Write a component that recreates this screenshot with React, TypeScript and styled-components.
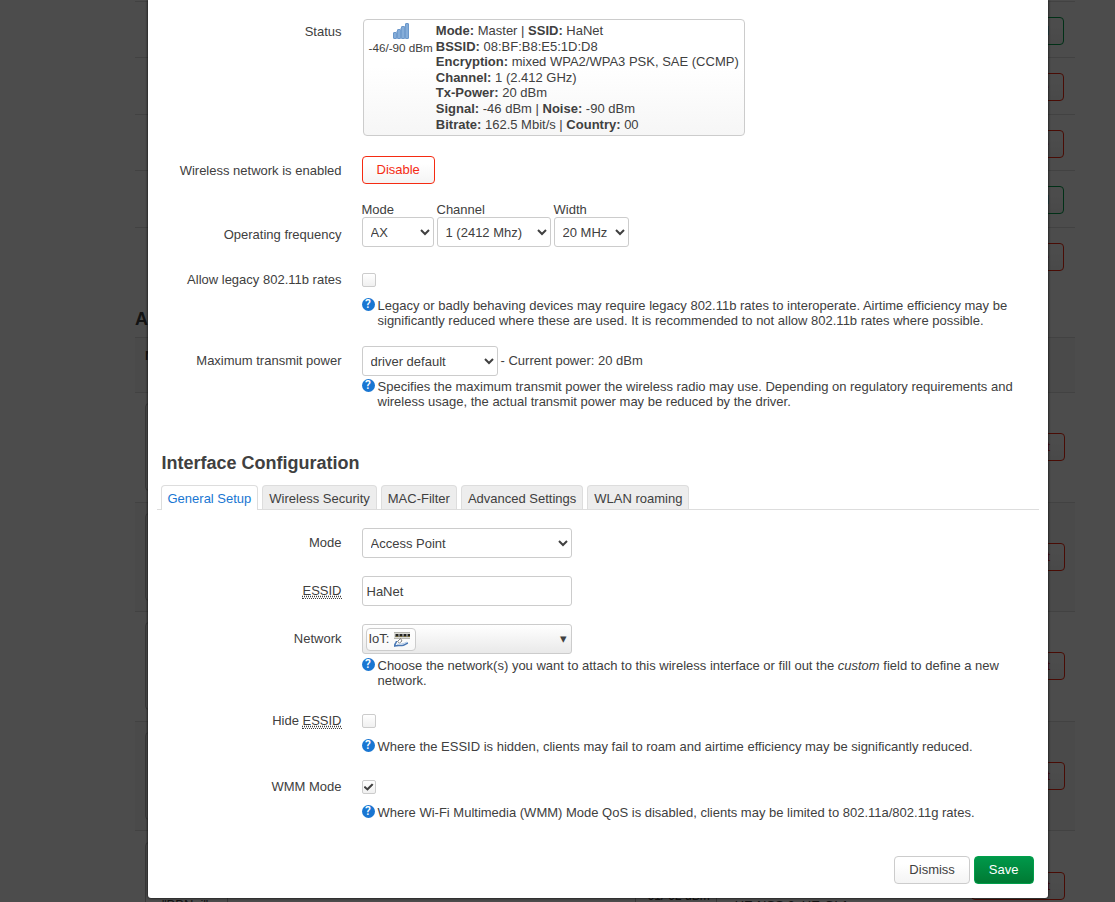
import React from 'react';
import styled, { createGlobalStyle, css } from 'styled-components';

const GlobalStyle = createGlobalStyle`
  *, *::before, *::after { box-sizing: border-box; }
  body {
    margin: 0;
    background: #fff;
    color: #404040;
    font: 13px/18px "Liberation Sans", Arial, sans-serif;
  }
  abbr { border-bottom: 1px dotted #404040; }
`;

const Stage = styled.div`
  position: relative;
  min-height: 100vh;
`;

/* ---------- page behind the dialog ---------- */

const Page = styled.div`
  position: absolute;
  inset: 0;
  overflow: hidden;
  padding: 1px 40px 0 135px;
`;

const DeviceList = styled.div`
  display: grid;
  grid-auto-rows: 1fr;
  height: 282px;
`;

const DeviceRow = styled.div`
  display: flex;
  justify-content: flex-end;
  align-items: flex-start;
  padding: 15px 11px 0;
  border-top: 1px solid #ddd;
`;

const PageTitle = styled.h3`
  margin: 26px 0 8px;
  font-size: 18px;
  line-height: 20px;
`;

const StationHead = styled.div`
  height: 55px;
  padding: 9px 10px;
  border-top: 1px solid #ddd;
  background: #f9f9f9;
  font-weight: bold;
`;

const StationList = styled.div`
  display: grid;
  grid-auto-rows: 1fr;
  height: 548px;
`;

const StationRow = styled.div<{ $striped?: boolean }>`
  display: grid;
  grid-template-columns: 83px minmax(0, 1fr) 82px 218px auto;
  column-gap: 18px;
  align-items: center;
  padding: 10px;
  border-top: 1px solid #ddd;
  background: ${p => (p.$striped ? '#f9f9f9' : '#fff')};
`;

const StationBadge = styled.div`
  display: flex;
  align-items: flex-end;
  height: 88px;
  padding: 0 0 15px 16px;
  border: 1px solid #bbb;
  border-radius: 4px;
  white-space: nowrap;
`;

const StationSignal = styled(StationBadge)`
  padding: 0 0 24px 8px;
  font-size: 12px;
`;

const StationRate = styled.div`
  padding-top: 40px;
`;

const DisconnectButton = styled.div`
  grid-column: 5;
`;

const Backdrop = styled.div`
  position: absolute;
  inset: 0;
  background: rgba(0, 0, 0, 0.7);
`;

/* ---------- dialog ---------- */

const Overlay = styled.div`
  position: relative;
  padding: 0 0 4px 80px;
`;

const Modal = styled.div`
  max-width: 900px;
  margin: 0 auto;
  padding: 17px 10px 14px;
  border-radius: 0 0 3px 3px;
  background: #fff;
  box-shadow: 0 0 3px #000;
`;

const Rows = styled.div`
  display: flex;
  flex-direction: column;
  gap: 18px;
  padding: 0 4px;
`;

const Row = styled.div`
  display: grid;
  grid-template-columns: 180px minmax(0, 1fr);
  column-gap: 20px;
`;

const RowLabel = styled.label<{ $low?: boolean }>`
  padding-top: ${p => (p.$low ? 24 : 6)}px;
  text-align: right;
`;

const Line = styled.div`
  display: flex;
  align-items: center;
  gap: 3px;
  min-height: 28px;
`;

const CheckLine = styled(Line)`
  min-height: 30px;
`;

const Help = styled.div`
  display: grid;
  grid-template-columns: 13px minmax(0, 1fr);
  column-gap: 3px;
  padding-top: 3px;
  line-height: 15px;
`;

const HelpMark = styled.span`
  display: block;
  width: 13px;
  height: 13px;
  border-radius: 50%;
  background: #1976d2;
  color: #fff;
  font: 500 12px/13px Roboto, sans-serif;
  text-align: center;
`;

const controlFrame = css`
  height: 30px;
  border: 1px solid #ccc;
  border-radius: 3px;
  background-color: #fff;
  color: #404040;
  font: 13px/18px "Liberation Sans", Arial, sans-serif;
`;

const Select = styled.select<{ $w: number }>`
  ${controlFrame}
  width: ${p => p.$w}px;
  padding: 4px;
`;

const TextInput = styled.input`
  ${controlFrame}
  width: 210px;
  padding: 4px;
`;

const CheckBox = styled.input`
  appearance: none;
  display: grid;
  place-items: center;
  width: 14px;
  height: 14px;
  margin: 0;
  border: 1px solid #ccc;
  border-radius: 2px;
  background: linear-gradient(#fff, #f0f0f0);

  &:checked::before {
    content: '';
    width: 10px;
    height: 8px;
    background: #404040;
    clip-path: polygon(0 50%, 16% 34%, 38% 62%, 84% 4%, 100% 20%, 40% 96%);
  }
`;

const Dropdown = styled.button`
  ${controlFrame}
  display: flex;
  align-items: center;
  justify-content: space-between;
  width: 210px;
  margin: 0 0 1px;
  padding: 0 4px 0 3px;
  background-image: linear-gradient(#fff, #e9e9e9);
`;

const DropTag = styled.span`
  display: flex;
  align-items: center;
  gap: 5px;
  height: 23px;
  padding: 0 5px 0 2px;
  border: 1px solid #ccc;
  border-radius: 4px;
  background: linear-gradient(#fff, #f8f8f8);
`;

const Caret = styled.span`
  font: 13px/18px "DejaVu Sans", sans-serif;
`;

const StatusBadge = styled.div`
  display: inline-flex;
  gap: 3px;
  margin: 2px 1px;
  padding: 3px 5px;
  border: 1px solid #ccc;
  border-radius: 4px;
  background: linear-gradient(#fff, #fff 40%, #f6f6f6);
  line-height: 1.2;
`;

const Signal = styled.div`
  display: flex;
  flex-direction: column;
  align-items: center;
  gap: 2px;
  font-size: 0.9em;
  line-height: 14px;
  white-space: nowrap;
`;

const BandLabel = styled.label`
  display: flex;
  flex-direction: column;
  line-height: 15px;
`;

type Tone = 'plain' | 'negative' | 'add' | 'save';

const tones = {
  plain: css`
    border-color: #ccc;
    color: #404040;
  `,
  negative: css`
    border-color: #f52b12;
    color: #f52b12;
  `,
  add: css`
    border-color: #00a04a;
    color: #00a04a;
  `,
  save: css`
    border-color: #009f4a;
    background: linear-gradient(#00984a, #007a33);
    color: #fff;
  `,
};

const Button = styled.button<{ $tone?: Tone }>`
  height: 28px;
  margin: 0;
  padding: 0 14px;
  border: 1px solid;
  border-radius: 4px;
  background: linear-gradient(#fff, #fff 25%, #f4f4f4);
  font: 13px/18px "Liberation Sans", Arial, sans-serif;
  ${p => tones[p.$tone || 'plain']}
`;

const SectionTitle = styled.h3`
  margin: 44px 4px 12px;
  font-size: 18px;
  line-height: 20px;
`;

const Tabs = styled.ul`
  display: flex;
  gap: 4px;
  margin: 0 -1px 18px;
  padding: 0 4px;
  border-bottom: 1px solid #ddd;
  list-style: none;
`;

const Tab = styled.li<{ $active?: boolean }>`
  height: ${p => (p.$active ? 25 : 24)}px;
  margin-bottom: ${p => (p.$active ? -1 : 0)}px;
  padding: 4px 6px 0;
  border: 1px solid #ddd;
  border-bottom: 0;
  border-radius: 4px 4px 0 0;
  background: ${p => (p.$active ? '#fff' : '#ededed')};

  a {
    color: ${p => (p.$active ? '#1976d2' : '#404040')};
    text-decoration: none;
  }
`;

const Footer = styled.div`
  display: flex;
  justify-content: flex-end;
  gap: 4px;
  margin-top: 36px;
  padding: 0 4px;
`;

const SignalIcon = () => (
  <svg width="16" height="16" viewBox="0 0 16 16" aria-hidden="true">
    <g fill="#85add9" stroke="#6b97ca" strokeWidth="1">
      <rect x="0.5" y="9.5" width="3" height="6" rx="0.5" />
      <rect x="4.5" y="6.500" width="3" height="9" rx="0.5" />
      <rect x="8.5" y="3.500" width="3" height="12" rx="0.5" />
      <rect x="12.5" y="0.5" width="3" height="15" rx="0.5" />
    </g>
    <path d="M4 8v8M8 5v11M12 3v13" stroke="#7aa3d2" />
  </svg>
);

const WifiDeviceIcon = () => (
  <svg width="16" height="16" viewBox="0 0 16 16" aria-hidden="true">
    <rect x="0" y="1" width="16" height="6" fill="#dcdcd6" />
    <path d="M0 1.500h16M0 7.500h16" stroke="#b4b4ae" />
    <path d="M1.500 3h3v3h-3zM5.500 3h3v3h-3zM9.500 3h3v3h-3zM13.500 3h2.500v3h-2.500z" fill="#222" />
    <path d="M2.500 5.500h1M6.500 5.500h1M10.500 5.500h1M14.500 5.500h1" stroke="#c9b341" />
    <path d="M3.500 10.500 6.500 7.500 8 10 5.500 12z" fill="#fff" stroke="#666" strokeWidth="0.8" />
    <path d="M2.500 10c0 2-2 3-2 5 3-1 5-.5 7.500-.5s3.500-2 6-2.500" fill="none" stroke="#4a78b4" strokeWidth="1.500" />
    <path d="M3 13.500c3-1 6 0 10-2.500" fill="none" stroke="#b3cbe8" />
  </svg>
);

const HelpText = ({ children }: { children: React.ReactNode }) => (
  <Help>
    <HelpMark>?</HelpMark>
    <span>{children}</span>
  </Help>
);

const devices: Array<{ tone: Tone; text: string }> = [
  { tone: 'add', text: 'Add' },
  { tone: 'negative', text: 'Remove' },
  { tone: 'negative', text: 'Remove' },
  { tone: 'add', text: 'Add' },
  { tone: 'negative', text: 'Remove' },
];

const stations = [
  { id: 1 },
  { id: 2 },
  { id: 3 },
  { id: 4 },
  { id: 5, network: '"BBN_i"', signal: '-91/-92 dBm', rate: 'HE-NSS 2, HE-GI 1' },
];

const tabs = ['General Setup', 'Wireless Security', 'MAC-Filter', 'Advanced Settings', 'WLAN roaming'];

export default function App() {
  return (
    <>
      <GlobalStyle />
      <Stage>
        <Page aria-hidden="true">
          <DeviceList>
            {devices.map((d, i) => (
              <DeviceRow key={i}>
                <Button $tone={d.tone} tabIndex={-1}>{d.text}</Button>
              </DeviceRow>
            ))}
          </DeviceList>
          <PageTitle>Associated Stations</PageTitle>
          <StationHead>Network</StationHead>
          <StationList>
            {stations.map((s, i) => (
              <StationRow key={s.id} $striped={i % 2 === 1}>
                <StationBadge>{s.network}</StationBadge>
                <span />
                {s.signal && <StationSignal>{s.signal}</StationSignal>}
                {s.rate && <StationRate>{s.rate}</StationRate>}
                <DisconnectButton>
                  <Button $tone="negative" tabIndex={-1}>Disconnect</Button>
                </DisconnectButton>
              </StationRow>
            ))}
          </StationList>
        </Page>
        <Backdrop />
        <Overlay>
          <Modal role="dialog" aria-label="Wireless network">
            <Rows>
              <Row>
                <RowLabel as="span">Status</RowLabel>
                <div>
                  <StatusBadge>
                    <Signal>
                      <SignalIcon />
                      <span>-46/-90 dBm</span>
                    </Signal>
                    <div>
                      <b>Mode:</b> Master | <b>SSID:</b> HaNet<br />
                      <b>BSSID:</b> 08:BF:B8:E5:1D:D8<br />
                      <b>Encryption:</b> mixed WPA2/WPA3 PSK, SAE (CCMP)<br />
                      <b>Channel:</b> 1 (2.412 GHz)<br />
                      <b>Tx-Power:</b> 20 dBm<br />
                      <b>Signal:</b> -46 dBm | <b>Noise:</b> -90 dBm<br />
                      <b>Bitrate:</b> 162.5 Mbit/s | <b>Country:</b> 00
                    </div>
                  </StatusBadge>
                </div>
              </Row>
              <Row>
                <RowLabel htmlFor="toggle">Wireless network is enabled</RowLabel>
                <Line><Button id="toggle" $tone="negative">Disable</Button></Line>
              </Row>
              <Row>
                <RowLabel as="span" $low>Operating frequency</RowLabel>
                <Line>
                  <BandLabel>Mode
                    <Select $w={72}><option>AX</option></Select>
                  </BandLabel>
                  <BandLabel>Channel
                    <Select $w={114}><option>1 (2412 Mhz)</option></Select>
                  </BandLabel>
                  <BandLabel>Width
                    <Select $w={75}><option>20 MHz</option></Select>
                  </BandLabel>
                </Line>
              </Row>
              <Row>
                <RowLabel htmlFor="legacy">Allow legacy 802.11b rates</RowLabel>
                <div>
                  <CheckLine><CheckBox type="checkbox" id="legacy" /></CheckLine>
                  <HelpText>
                    Legacy or badly behaving devices may require legacy 802.11b rates to interoperate. Airtime efficiency may be significantly reduced where these are used. It is recommended to not allow 802.11b rates where possible.
                  </HelpText>
                </div>
              </Row>
              <Row>
                <RowLabel htmlFor="power">Maximum transmit power</RowLabel>
                <div>
                  <Line>
                    <Select id="power" $w={136}><option>driver default</option></Select>
                    <span>- Current power: 20 dBm</span>
                  </Line>
                  <HelpText>
                    Specifies the maximum transmit power the wireless radio may use. Depending on regulatory requirements and wireless usage, the actual transmit power may be reduced by the driver.
                  </HelpText>
                </div>
              </Row>
            </Rows>

            <SectionTitle>Interface Configuration</SectionTitle>
            <Tabs>
              {tabs.map((t, i) => (
                <Tab key={t} $active={i === 0}><a href="#">{t}</a></Tab>
              ))}
            </Tabs>

            <Rows>
              <Row>
                <RowLabel htmlFor="mode">Mode</RowLabel>
                <Line><Select id="mode" $w={210}><option>Access Point</option></Select></Line>
              </Row>
              <Row>
                <RowLabel htmlFor="essid"><abbr title="Extended Service Set Identifier">ESSID</abbr></RowLabel>
                <Line><TextInput id="essid" type="text" defaultValue="HaNet" /></Line>
              </Row>
              <Row>
                <RowLabel htmlFor="network">Network</RowLabel>
                <div>
                  <Dropdown id="network" type="button" aria-haspopup="listbox">
                    <DropTag>IoT: <WifiDeviceIcon /></DropTag>
                    <Caret>▾</Caret>
                  </Dropdown>
                  <HelpText>
                    Choose the network(s) you want to attach to this wireless interface or fill out the <em>custom</em> field to define a new network.
                  </HelpText>
                </div>
              </Row>
              <Row>
                <RowLabel htmlFor="hide">Hide <abbr title="Extended Service Set Identifier">ESSID</abbr></RowLabel>
                <div>
                  <CheckLine><CheckBox type="checkbox" id="hide" /></CheckLine>
                  <HelpText>
                    Where the ESSID is hidden, clients may fail to roam and airtime efficiency may be significantly reduced.
                  </HelpText>
                </div>
              </Row>
              <Row>
                <RowLabel htmlFor="wmm">WMM Mode</RowLabel>
                <div>
                  <CheckLine><CheckBox type="checkbox" id="wmm" defaultChecked /></CheckLine>
                  <HelpText>
                    Where Wi-Fi Multimedia (WMM) Mode QoS is disabled, clients may be limited to 802.11a/802.11g rates.
                  </HelpText>
                </div>
              </Row>
            </Rows>

            <Footer>
              <Button>Dismiss</Button>
              <Button $tone="save">Save</Button>
            </Footer>
          </Modal>
        </Overlay>
      </Stage>
    </>
  );
}
